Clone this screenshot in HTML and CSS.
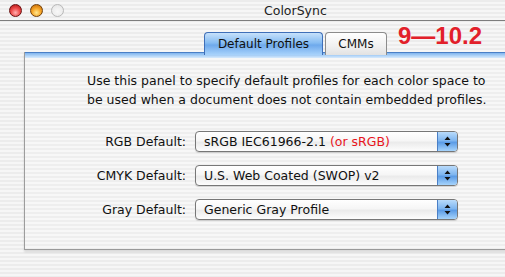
FILE: index.html
```html
<!DOCTYPE html>
<html lang="en">
<head>
  <meta charset="UTF-8" />
  <title>ColorSync</title>
  <link rel="stylesheet" href="styles.css">
</head>
<body>
  <div class="window">
    <div class="titlebar">
      <div class="lights">
        <span class="light red"></span>
        <span class="light yellow"></span>
        <span class="light off"></span>
      </div>
      <div class="title">ColorSync</div>
    </div>

    <div class="tabbar">
      <div class="tab active">Default Profiles</div>
      <div class="tab cmms">CMMs</div>
      <div class="version">9—10.2</div>
    </div>

    <div class="panel">
      <p class="intro">Use this panel to specify default profiles for each color space to<br/>be used when a document does not contain embedded profiles.</p>

      <div class="rows">
        <label>RGB Default:</label>
        <div class="popup">
          <span class="value">sRGB IEC61966-2.1 <em>(or sRGB)</em></span>
          <span class="arrows"><svg width="7" height="11" viewBox="0 0 7 11"><path d="M3.5 0.5L6.5 4H0.5Z M3.5 10.5L6.5 7H0.5Z" fill="#111"/></svg></span>
        </div>

        <label>CMYK Default:</label>
        <div class="popup">
          <span class="value">U.S. Web Coated (SWOP) v2</span>
          <span class="arrows"><svg width="7" height="11" viewBox="0 0 7 11"><path d="M3.5 0.5L6.5 4H0.5Z M3.5 10.5L6.5 7H0.5Z" fill="#111"/></svg></span>
        </div>

        <label>Gray Default:</label>
        <div class="popup">
          <span class="value">Generic Gray Profile</span>
          <span class="arrows"><svg width="7" height="11" viewBox="0 0 7 11"><path d="M3.5 0.5L6.5 4H0.5Z M3.5 10.5L6.5 7H0.5Z" fill="#111"/></svg></span>
        </div>
      </div>
    </div>
  </div>
</body>
</html>
```

FILE: styles.css
```css
body {
  margin: 0;
  padding: 0;
  overflow: hidden;
  font-family: "DejaVu Sans", sans-serif;
  font-size: 12.5px;
  color: #111;
}
.window {
  width: 505px;
  height: 277px;
  overflow: hidden;
  background: repeating-linear-gradient(#ececec 0 2px, #f6f6f6 2px 4px);
}
.titlebar {
  height: 20px;
  border-bottom: 1px solid #7d7d7d;
  display: flex;
  align-items: center;
}
.lights {
  display: flex;
  gap: 8px;
  padding-left: 9px;
}
.light {
  width: 13px;
  height: 13px;
  border-radius: 50%;
  box-sizing: border-box;
}
.light.red {
  background: radial-gradient(circle at 50% 70%, #ffb0b0 0, #f0504f 45%, #b81818 90%);
  border: 1px solid #6a1010;
}
.light.yellow {
  background: radial-gradient(circle at 50% 70%, #ffe890 0, #f7a82a 45%, #c86c08 90%);
  border: 1px solid #70400a;
}
.light.off {
  background: radial-gradient(circle at 50% 60%, #f8f8f8 0, #ececec 60%, #dcdcdc 100%);
  border: 1px solid #b8b8b8;
}
.title {
  margin-left: 200px;
  font-size: 12.5px;
  color: #222;
}
.tabbar {
  display: flex;
  align-items: flex-start;
  padding: 3px 0 0 204px;
  height: 31px;
  box-sizing: border-box;
}
.tab {
  margin-top: 8px;
  height: 23px;
  box-sizing: border-box;
  padding-top: 4px;
  text-align: center;
  border: 1px solid #8c8c8c;
  border-bottom: none;
  border-radius: 4px 4px 0 0;
  background: linear-gradient(#ffffff, #f0f0f0 60%, #e2e2e2);
  font-size: 12px;
  color: #111;
}
.tab.active {
  width: 119px;
  border-color: #3f6fb8;
  background: linear-gradient(#c6e1fb, #86bcf2 45%, #6ea9ec 55%, #a9d3fb);
  margin-right: 2px;
}
.tab.cmms {
  width: 62px;
}
.version {
  margin-left: 11px;
  font-family: "Liberation Sans", Arial, sans-serif;
  font-weight: bold;
  font-size: 24px;
  line-height: 24px;
  color: #e2202a;
}
.panel {
  margin-left: 24px;
  margin-right: -20px;
  height: 198px;
  box-sizing: border-box;
  border-left: 1px solid #9c9c9c;
  border-bottom: 1px solid #9a9a9a;
  box-shadow: 0 2px 2px rgba(0, 0, 0, 0.12);
  background: repeating-linear-gradient(#eeeeee 0 2px, #f7f7f7 2px 4px);
}
.panel::before {
  content: "";
  display: block;
  height: 5px;
  border-top: 1px solid #4a7fc6;
  background: linear-gradient(#7fb4ee, #b4d6f8 60%, #d8eafc);
}
.intro {
  margin: 0;
  padding: 13px 0 0 62px;
  line-height: 19px;
  white-space: nowrap;
}
.rows {
  display: grid;
  grid-template-columns: 161px 263px;
  column-gap: 9px;
  row-gap: 13px;
  align-items: center;
  margin-top: 22px;
}
.rows label {
  text-align: right;
}
.popup {
  height: 21px;
  box-sizing: border-box;
  display: flex;
  align-items: stretch;
  border: 1px solid #777;
  border-radius: 4px;
  background: linear-gradient(#ffffff, #f6f6f6 45%, #ebebeb 55%, #fdfdfd);
  box-shadow: 0 1px 1px rgba(0, 0, 0, 0.15);
  overflow: hidden;
}
.popup .value {
  flex: 1;
  padding-left: 8px;
  line-height: 19px;
  white-space: nowrap;
}
.popup em {
  font-style: normal;
  color: #e8141c;
}
.arrows {
  width: 19px;
  border-left: 1px solid #4a7fc6;
  display: flex;
  align-items: center;
  justify-content: center;
  background: linear-gradient(#b9dbfb, #7fb6f0 45%, #5c9ce6 55%, #a6d4fc);
}
```
